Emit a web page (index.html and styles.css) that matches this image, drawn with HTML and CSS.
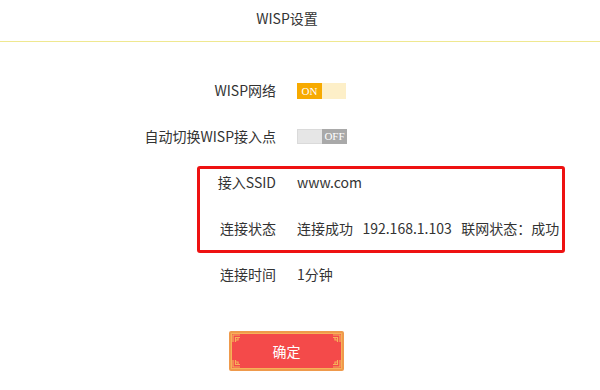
FILE: index.html
```html
<!DOCTYPE html>
<html lang="zh-CN">
<head>
    <meta charset="UTF-8">
    <meta name="viewport" content="width=device-width, initial-scale=1.0">
    <title>WISP设置</title>
    <link rel="stylesheet" href="styles.css">
</head>
<body>
    <div class="header">WISP设置</div>

    <div class="form">
        <div class="row">
            <div class="label">WISP网络</div>
            <div class="value">
                <span class="switch switch-on"><span class="knob">ON</span><span class="rest"></span></span>
            </div>
        </div>
        <div class="row">
            <div class="label">自动切换WISP接入点</div>
            <div class="value">
                <span class="switch switch-off"><span class="rest"></span><span class="knob">OFF</span></span>
            </div>
        </div>

        <div class="highlight">
            <div class="row row-small">
                <div class="label">接入SSID</div>
                <div class="value">www.com</div>
            </div>
            <div class="row row-small row-gap">
                <div class="label">连接状态</div>
                <div class="value">连接成功&nbsp;&nbsp;&nbsp;192.168.1.103&nbsp;&nbsp;&nbsp;联网状态：成功</div>
            </div>
        </div>

        <div class="row row-small row-time">
            <div class="label">连接时间</div>
            <div class="value">1分钟</div>
        </div>

        <div class="actions">
            <button class="btn-ok">
                <!-- corner ornaments -->
                <svg class="corner tl" width="9" height="9" viewBox="0 0 9 9"><path d="M1 8V1h7M3.5 8V3.5H8M3.5 6H6V3.5" fill="none" stroke="#f6b25a" stroke-width="1.2"/></svg>
                <svg class="corner tr" width="9" height="9" viewBox="0 0 9 9"><path d="M1 8V1h7M3.5 8V3.5H8M3.5 6H6V3.5" fill="none" stroke="#f6b25a" stroke-width="1.2"/></svg>
                <svg class="corner bl" width="9" height="9" viewBox="0 0 9 9"><path d="M1 8V1h7M3.5 8V3.5H8M3.5 6H6V3.5" fill="none" stroke="#f6b25a" stroke-width="1.2"/></svg>
                <svg class="corner br" width="9" height="9" viewBox="0 0 9 9"><path d="M1 8V1h7M3.5 8V3.5H8M3.5 6H6V3.5" fill="none" stroke="#f6b25a" stroke-width="1.2"/></svg>
                确定
            </button>
        </div>
    </div>
</body>
</html>
```

FILE: styles.css
```css
body {
    margin: 0;
    width: 600px;
    background: #fff;
    color: #333;
    font-family: "Noto Sans CJK SC", "Noto Sans", sans-serif;
    font-size: 14px;
}
.header {
    height: 41px;
    line-height: 36px;
    text-align: center;
    border-bottom: 1px solid #efe890;
    padding-right: 26px;
}
.form {
    padding-top: 25px;
}
.row {
    display: flex;
    align-items: center;
    height: 46px;
}
.label {
    width: 276px;
    text-align: right;
    flex-shrink: 0;
}
.value {
    margin-left: 21px;
    display: flex;
    align-items: center;
    white-space: nowrap;
}
.row-small {
    height: 26px;
}
.row-gap {
    margin-top: 20px;
}
.row-time {
    margin-top: 8px;
}
.highlight {
    margin: 7px 0 0 197px;
    width: 362px;
    border: 3px solid #ee1111;
    border-radius: 3px;
    padding-bottom: 9px;
}
.highlight .label {
    width: 76px;
}
.switch {
    display: flex;
    width: 49px;
    height: 16px;
    font-family: "Liberation Serif", serif;
    font-size: 11px;
    line-height: 16px;
    color: #fff;
    margin-top: 1px;
}
.switch .knob {
    width: 25px;
    text-align: center;
}
.switch .rest {
    flex: 1;
}
.switch-on .knob {
    background: #f7aa00;
}
.switch-on .rest {
    background: #fdefc8;
}
.switch-off {
    width: 50px;
    height: 15px;
    line-height: 15px;
    margin-top: 0;
}
.switch-off .rest {
    background: #e6e6e6;
    border: 1px solid #dadada;
    border-right: none;
}
.switch-off .knob {
    background: #a9a9a9;
}
.actions {
    margin-top: 44px;
    padding-left: 229px;
}
.btn-ok {
    position: relative;
    width: 115px;
    height: 40px;
    border: 2px solid #ef9a4c;
    border-radius: 2px;
    background: #f44a4a;
    color: #fff;
    font-family: "Noto Sans CJK SC", sans-serif;
    font-size: 14px;
    padding: 0;
    box-shadow: inset 0 0 0 1px #f6b25a;
}
.corner {
    position: absolute;
}
.corner.tl { top: 1px; left: 1px; }
.corner.tr { top: 1px; right: 1px; transform: scaleX(-1); }
.corner.bl { bottom: 1px; left: 1px; transform: scaleY(-1); }
.corner.br { bottom: 1px; right: 1px; transform: scale(-1, -1); }
```
